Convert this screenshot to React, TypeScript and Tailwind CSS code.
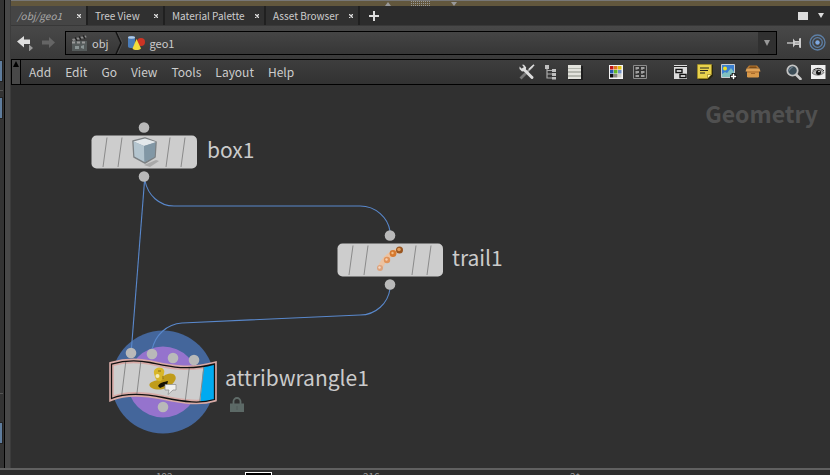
import type { ReactNode } from "react";

const tabs = [
  { name: "/obj/geo1", active: true, width: "w-[77px]" },
  { name: "Tree View", active: false, width: "w-[77px]" },
  { name: "Material Palette", active: false, width: "w-[101px]" },
  { name: "Asset Browser", active: false, width: "w-[94px]" },
];

const menus = ["Add", "Edit", "Go", "View", "Tools", "Layout", "Help"];

function Icon({ children }: { children: ReactNode }) {
  return (
    <svg viewBox="0 0 16 16" className="block size-4 shrink-0" aria-hidden="true">
      {children}
    </svg>
  );
}

const swatches = ["#c01818", "#e07818", "#e0c010", "#2858b0", "#60b828", "#7090c8", "#101010", "#888880", "#d0d0c8"];

const toolGroups: { label: string; icon: ReactNode }[][] = [
  [
    {
      label: "Tools",
      icon: (
        <Icon>
          <path d="M8 8 13.500 2.500" stroke="#999" strokeWidth="2" />
          <path d="M10 5.500 15 .800" stroke="#ddd" strokeWidth="1.600" />
          <path d="M1.500 14.500 7 9" stroke="#777" strokeWidth="2.800" />
          <path d="M4.500 5 13 13.500" stroke="#ddd" strokeWidth="3" strokeLinecap="round" />
          <path d="M.500 2.500v2.500l2.500 2.500 3.500-.600.700-3.500L5 .800H3l1.800 2.200-.500 1.500-1.400.300z" fill="#ddd" />
        </Icon>
      ),
    },
    {
      label: "Tree",
      icon: (
        <Icon>
          <path d="M4 3v11h6M4 6.500h6M4 10h6" stroke="#aaa" strokeWidth="1.200" fill="none" />
          <path d="M2 1h4v4H2zM9 5h4v3H9zM9 9h4v3H9zM9 13h4v2.500H9z" fill="#c0c0c0" />
        </Icon>
      ),
    },
    {
      label: "List",
      icon: (
        <Icon>
          <path d="M2 2h14v14H2z" fill="#1e1e1e" />
          <path d="M1 1h13v14H1z" fill="#b4b6ae" />
          <path d="M1 1h13v3H1zM1 5h13v2H1zM1 9h13v2H1zM1 13h13v2H1z" fill="#e2e2dc" />
        </Icon>
      ),
    },
  ],
  [
    {
      label: "Colour palette",
      icon: (
        <Icon>
          <path d="M1 1h14v14H1z" fill="#f4f4f4" />
          {swatches.map((c, i) => (
            <rect key={c} x={2 + (i % 3) * 4} y={2 + Math.floor(i / 3) * 4} width="3.500" height="3.500" fill={c} />
          ))}
        </Icon>
      ),
    },
    {
      label: "Shape palette",
      icon: (
        <Icon>
          <path d="M1.500 1.500h13v13h-13z" fill="#333" stroke="#8c8c8c" />
          <path d="M3.500 4h3.500M9 4h3.500M3.500 8h3.500M9 8h3.500M3.500 12h3.500M9 12h3.500" stroke="#c4c4c4" strokeWidth="1.600" />
          <path d="M3.500 5.500h2M9 5.500h2M3.500 9.500h2M9 9.500h2" stroke="#777" />
        </Icon>
      ),
    },
  ],
  [
    {
      label: "Network box",
      icon: (
        <Icon>
          <path d="M1 1h13v14H1z" fill="#dcdcdc" />
          <path d="M1 2.500h13" stroke="#222" />
          <path d="M3 5.500h6v3H3zM7 10.500h6v3H7z" fill="#fff" stroke="#111" strokeWidth="1.400" />
        </Icon>
      ),
    },
    {
      label: "Sticky note",
      icon: (
        <Icon>
          <path d="M1 1h15v11l-4 4H2z" fill="#2a2610" />
          <path d="M.500.500h14v10l-4 4H.500z" fill="#e8d24c" stroke="#a8901c" strokeWidth=".6" />
          <path d="M14.500 10.500h-4v4z" fill="#fff6a8" stroke="#8a7618" strokeWidth=".6" />
          <path d="M3 4h9M3 6.500h8M3 9h5" stroke="#222" strokeWidth="1.200" />
        </Icon>
      ),
    },
    {
      label: "Background image",
      icon: (
        <Icon>
          <path d="M.500.500h13v13H.500z" fill="#3b7fd0" stroke="#c8ccd0" />
          <circle cx="4" cy="4.500" r="2" fill="#f0e020" />
          <path d="M1 10 4 8l2 1 4-5 3 4v5H1z" fill="#7fc0c0" />
          <path d="M12.500 9v7M9 12.500h7" stroke="#111" strokeWidth="3.600" />
          <path d="M12.500 9.800v5.400M9.800 12.500h5.400" stroke="#fff" strokeWidth="1.500" />
        </Icon>
      ),
    },
    {
      label: "Assets",
      icon: (
        <Icon>
          <path d="M2 6h12v7l-1 .500H3L2 13z" fill="#d8994a" />
          <path d="M4 1.500h8l2.500 3H1.500z" fill="#b87830" />
          <path d="M5 2.500h6l1 1.500H4z" fill="#7c4a14" />
          <path d="m1.500 4.500h13l1 3H.500z" fill="#e0a358" />
          <path d="M2 7.500h12v1H2z" fill="#a8692a" />
          <path d="M6 9.500h4" stroke="#a8692a" />
        </Icon>
      ),
    },
  ],
  [
    {
      label: "Find",
      icon: (
        <Icon>
          <path d="m10 10.500 4.500 4.500" stroke="#ccc" strokeWidth="2.600" strokeLinecap="round" />
          <circle cx="6.500" cy="6.500" r="5.200" fill="#3c4d57" stroke="#c4c4c4" strokeWidth="1.800" />
          <path d="M3.500 6.500a3 3 0 0 1 3-3" stroke="#8090a0" fill="none" />
        </Icon>
      ),
    },
    {
      label: "Display options",
      icon: (
        <Icon>
          <path d="M1 1h14.500v14H1z" fill="#f0f0f0" />
          <path d="M2 9c2.500-4 9-4.500 12-.500-3 3.500-9 3.500-12 .500z" fill="#b8b8b8" stroke="#444" strokeWidth=".6" />
          <path d="M2.500 7c3-3.500 8.500-3.500 11.500 0" stroke="#222" fill="none" />
          <circle cx="8.500" cy="8.500" r="2.500" fill="#111" />
          <circle cx="9" cy="7.500" r=".8" fill="#fff" />
        </Icon>
      ),
    },
  ],
];

function NodeBody({ children }: { children: ReactNode }) {
  return (
    <svg viewBox="0 0 106 60" className="block h-[60px] w-[106px] shrink-0" aria-hidden="true">
      <circle cx="53" cy="5.500" r="5.300" fill="#b9b9b9" />
      <circle cx="53" cy="54.500" r="5.300" fill="#b9b9b9" />
      <rect x=".5" y="13.500" width="105.500" height="33" rx="5" fill="#cdcdcd" />
      <path d="m16 15.500-4 29.500M31 15.500l-4 29.500M79 15.500l-4 29.500M94 15.500l-4 29.500" stroke="#8a8a8a" />
      {children}
    </svg>
  );
}

const label = "pb-[6px] text-[21px] leading-8 whitespace-nowrap text-[#cbcbcb]";

const ribbon =
  "M111.500 364C122 361 137 360 150 362.500S185 372 214.500 364V399.500C200 404 185 402 163 397.500S125 393 111.500 398.500z";

function Network() {
  return (
    <main className="relative min-h-[383px] flex-1 overflow-hidden bg-[#303030]">
      <h1 className="absolute top-[10px] right-3 text-[23px] leading-9 font-bold text-[#505050]">Geometry</h1>

      <svg viewBox="0 0 500 383" className="absolute top-0 left-0 h-[383px] w-[500px]" aria-hidden="true">
        <circle cx="152" cy="297" r="51.500" fill="#44669b" />
        <circle cx="152" cy="297" r="35.500" fill="#9573cd" />
        <g fill="none" stroke="#5988cc" strokeWidth="1.100">
          <path d="M133.500 96 120.500 263" />
          <path d="M134 96c3 14 14 25 29 25h186c16 0 28 12 30 25" />
          <path d="M379 204c-2 14-14 26-30 26l-178 8c-15 1-27 12-30 27" />
        </g>
      </svg>

      <div className="absolute top-[37px] left-[80px] flex items-center gap-[10px]">
        <NodeBody>
          <path d="m53 43 12-5 3 1-9 6z" fill="#9a9a9a" opacity=".7" />
          <path d="m42 19 12-3 11 4-1 15-10 6-11-6z" fill="#8fa1ad" stroke="#7c8083" strokeWidth="1.600" strokeLinejoin="round" />
          <path d="m42.500 19.500 11.500-3 11 3.500-12 4z" fill="#e3e8eb" />
          <path d="m42.500 19.500 10.500 4.500.500 16-10-5.500z" fill="#b4c5cf" />
          <path d="m53 24 11.500-3.500-1 14.500-10 5z" fill="#8197a5" />
        </NodeBody>
        <span className={label}>box1</span>
      </div>

      <div className="absolute top-[145px] left-[326px] flex items-center gap-[9px]">
        <NodeBody>
          <path d="M43 38C46 30 52 24 62 20" stroke="#ecc3a2" strokeWidth="5" fill="none" />
          <circle cx="43" cy="38" r="3" fill="#dca27c" />
          <circle cx="50" cy="30" r="3.200" fill="#e0935a" />
          <circle cx="56" cy="23.500" r="3.400" fill="#d67a30" />
          <circle cx="62.500" cy="20" r="3.500" fill="#9a5620" />
          <circle cx="62" cy="19.500" r="1.800" fill="#e6a05c" />
          <circle cx="55.500" cy="23" r="1.200" fill="#f4bc84" />
          <circle cx="49.500" cy="29.500" r="1.200" fill="#f6d0b0" />
          <circle cx="42.500" cy="37.500" r="1.200" fill="#f4d8c4" />
        </NodeBody>
        <span className={label}>trail1</span>
      </div>

      <div className="absolute top-[262px] left-[97px] flex items-center gap-[9px]">
        <svg viewBox="108 347 108 66" className="block h-[66px] w-[108px] shrink-0 overflow-visible" aria-hidden="true">
          <clipPath id="flag">
            <path d={ribbon} />
          </clipPath>
          <g fill="#b9b9b9">
            <circle cx="131" cy="353" r="5.300" />
            <circle cx="152" cy="354" r="5.300" />
            <circle cx="173" cy="358" r="5.300" />
            <circle cx="194" cy="360" r="5.300" />
            <circle cx="163" cy="407" r="5.300" />
          </g>
          <path d={ribbon} fill="#cdcdcd" stroke="#d8aaa6" strokeWidth="4.600" />
          <g clipPath="url(#flag)">
            <path d="M204 358h14v48h-18z" fill="#00aaf0" />
            <path d="m126 360-4.500 37M141 360l-4.500 37M189.500 366l-4.500 37M204 366l-4.500 37" stroke="#888" />
          </g>
          <path d={ribbon} fill="none" stroke="#111" strokeWidth="1.300" />
          <path d="M149.500 384c2-3 6-3 9-4.500 4-2 7-6 12-6 4 0 6 3 5 6-2 5-8 9-15 10-6 .500-12-2-11-5.500z" fill="#c09c1a" />
          <path d="M154 371c1-4 8-5 10-1 1 3-1 4 0 7l-3 4c-3 1-5-1-6-4-.500-2-1.500-4-1-6z" fill="#d8b628" />
          <path d="M158 386c2-4 6-4 10-5l-1 4-7 3z" fill="#171204" />
          <circle cx="157.500" cy="376" r="2" fill="#f2eab8" />
          <path d="M158 371h3M163 376v3" stroke="#8a6c10" />
          <path d="M165 384.500h11v5.500h-3l-5 4.500 1-4.500h-4z" fill="#f0f0f0" stroke="#888" strokeWidth=".7" />
        </svg>
        <span className={label}>attribwrangle1</span>
      </div>
      <svg viewBox="0 0 14 16" className="absolute top-[312px] left-[219px] h-4 w-[14px]" role="img" aria-label="Locked">
        <path d="M3.500 7V4.500a3.500 3.500 0 0 1 7 0V7" fill="none" stroke="#606c69" strokeWidth="1.800" />
        <path d="M0 6.500h14V15H0z" fill="#5c6966" />
        <path d="M6.500 9h1v4h-1z" fill="#505b58" />
      </svg>
    </main>
  );
}

export default function App() {
  return (
    <div className="flex min-h-screen flex-col border-r border-white bg-[#303030] font-['Noto_Sans_CJK_SC','Noto_Sans',sans-serif] text-[#cccccc]">
      <div className="flex flex-1">
        <aside className="flex w-[11px] shrink-0 flex-col border-r border-[#3c3c3c] bg-[#484848]">
          <div className="flex w-[5px] flex-1 flex-col border-r border-black bg-[#333333]">
            <div className="mt-[60px] h-[22px] w-[3px] border-y border-r border-[#222222] bg-[#5f7d9e]" />
            <div className="mt-2 h-px w-[3px] bg-[#555555]" />
            <div className="mt-[6px] h-[22px] w-[3px] border-y border-r border-[#222222] bg-[#5f7d9e]" />
            <div className="mt-auto h-px w-[3px] bg-[#555555]" />
            <div className="mt-7 mb-6 h-[22px] w-[3px] border-y border-r border-[#222222] bg-[#5f7d9e]" />
          </div>
        </aside>

        <div className="flex min-w-0 flex-1 flex-col">
          <div className="flex h-[6px] items-center justify-center gap-5 border-t border-[#777777] bg-[#62573d]">
            <svg viewBox="0 0 6 4" className="h-[4px] w-[6px]" aria-hidden="true"><path d="M0 4 3 0l3 4z" fill="#999" /></svg>
            <svg viewBox="0 0 20 5" className="h-[5px] w-5" aria-hidden="true">
              <path d="M0 .500h20M0 2.500h20M0 4.500h20" stroke="#999" strokeDasharray="1 1" />
            </svg>
            <svg viewBox="0 0 6 4" className="h-[4px] w-[6px]" aria-hidden="true"><path d="M0 0h6L3 4z" fill="#999" /></svg>
          </div>

          <div className="flex h-5 items-stretch border-b border-[#383838] bg-[#2c2c2c]">
            {tabs.map((t) => (
              <div
                key={t.name}
                className={`${t.width} flex items-center justify-between border-r-2 border-[#202020] pr-[5px] ${t.active ? "bg-[#454545] pl-[6px]" : "bg-[#303030] pl-[7px]"}`}
              >
                <button className={`text-[10px] leading-5 whitespace-nowrap ${t.active ? "italic text-[#aaaaaa]" : ""}`}>{t.name}</button>
                <button aria-label={`Close ${t.name}`}>
                  <svg viewBox="0 0 4 4" className="block size-1"><path d="m0 0 4 4M4 0 0 4" stroke="#ddd" strokeWidth="1.300" /></svg>
                </button>
              </div>
            ))}
            <button aria-label="New tab" className="px-[9px]">
              <svg viewBox="0 0 10 10" className="block size-[10px]"><path d="M5 0v10M0 5h10" stroke="#ddd" strokeWidth="2" /></svg>
            </button>
            <div className="ml-auto flex items-center gap-[10px] pr-[6px]">
              <button aria-label="Maximize pane" className="h-2 w-[10px] bg-[#dddddd]" />
              <button aria-label="Pane menu">
                <svg viewBox="0 0 6 5" className="block h-[5px] w-[6px]"><path d="M0 0h6L3 5z" fill="#ddd" /></svg>
              </button>
            </div>
          </div>

          <div className="flex h-[33px] items-center bg-linear-to-b from-[#484848] to-[#3a3a3a] pr-1 pl-[6px]">
            <button aria-label="Back" className="mr-2">
              <svg viewBox="0 0 17 17" className="block size-[17px]">
                <path d="M0 7.500 7 2v3.500h6v4.500H7v3.500z" fill="#dedede" />
                <path d="m12 10.500 4 3.500-4 3.500z" fill="#999" />
              </svg>
            </button>
            <button aria-label="Forward" className="mr-[10px]">
              <svg viewBox="0 0 13 13" className="block size-[13px]"><path d="M13 6.500 7 1v3.500H0v4h7V12z" fill="#656565" /></svg>
            </button>
            <div className="flex h-6 min-w-0 flex-1 items-stretch border border-black bg-linear-to-b from-[#454545] to-[#363636] text-[11px] leading-5">
              <button className="flex items-center gap-[3px] pl-[5px]">
                <svg viewBox="0 0 18 18" className="block size-[18px]" aria-hidden="true">
                  <path d="M1 7h15v10H1z" fill="#555b5b" />
                  <path d="m1 5 14-3.500.500 2L2 7z" fill="#8c8c8c" />
                  <path d="m4 3.500 2 3M8 2.500l2 3M12 1.500l2 3" stroke="#222" strokeWidth="1.500" />
                  <path d="M1 8.500h15" stroke="#999" strokeDasharray="3 2" strokeWidth="2" />
                  <path d="M4 12h4v3H4zM10 12l3-1v4l-3-1z" fill="#8a9494" />
                </svg>
                obj
              </button>
              <svg viewBox="0 0 8 22" className="ml-[6px] block h-[22px] w-2" aria-hidden="true">
                <path d="m1 0 5 11-5 11" fill="none" stroke="#141414" strokeWidth="1.500" />
                <path d="m2.500 0 5 11-5 11" fill="none" stroke="#555" strokeWidth=".7" />
              </svg>
              <button className="flex items-center gap-[5px] pl-[5px]">
                <svg viewBox="0 0 17 16" className="block h-4 w-[17px]" aria-hidden="true">
                  <path d="M0 2.500C0 .500 7 .500 7 2.500v9c0 2-7 2-7 0z" fill="#4a7cb8" />
                  <ellipse cx="3.500" cy="2.500" rx="3.500" ry="1.200" fill="#b4cce4" />
                  <circle cx="13" cy="7" r="4" fill="#cc3424" />
                  <path d="m8.500 4 4.500 9.500c-2 2-7 2-8.500 0z" fill="#f2dc3c" />
                </svg>
                geo1
              </button>
              <button aria-label="Path history" className="ml-auto flex w-[18px] items-center justify-center bg-[#303030]">
                <svg viewBox="0 0 6 6" className="block size-[6px]"><path d="M0 0h6L3 6z" fill="#999" /></svg>
              </button>
            </div>
            <button aria-label="Pin" className="ml-[10px]">
              <svg viewBox="0 0 16 12" className="block h-3 w-4">
                <path d="M0 6h6" stroke="#bbb" strokeWidth="1.500" />
                <path d="M6 1.500 8 4h4V1.500l2-.500v10l-2-.500V8H8l-2 2.500z" fill="#ccc" />
                <path d="M8 6h4" stroke="#888" />
              </svg>
            </button>
            <button aria-label="Link pane" className="ml-[6px]">
              <svg viewBox="0 0 17 17" className="block size-[17px]" fill="none">
                <circle cx="8.500" cy="8.500" r="7.500" stroke="#5d7fa6" strokeWidth="1.300" />
                <circle cx="8.500" cy="8.500" r="4.800" stroke="#5d7fa6" strokeWidth="1.300" />
                <circle cx="8.500" cy="8.500" r="2.200" fill="#7ea8e0" />
              </svg>
            </button>
          </div>

          <nav className="flex h-[26px] items-stretch border-y border-black bg-linear-to-b from-[#3e3e3e] to-[#323232] pr-1">
            <button aria-label="Collapse toolbar" className="flex w-[10px] justify-center border-x border-black bg-[#484848] pt-px">
              <svg viewBox="0 0 6 6" className="block size-[6px]"><path d="M0 6 3 0l3 6z" fill="#000" /></svg>
            </button>
            <div className="flex items-center gap-[14px] pl-2 text-[12px] leading-6">
              {menus.map((m) => (
                <button key={m}>{m}</button>
              ))}
            </div>
            <div className="ml-auto flex items-center gap-[25px]">
              {toolGroups.map((group) => (
                <div key={group[0].label} className="flex gap-2">
                  {group.map((tool) => (
                    <button key={tool.label} aria-label={tool.label}>{tool.icon}</button>
                  ))}
                </div>
              ))}
            </div>
          </nav>

          <Network />
        </div>
      </div>

      <footer className="relative h-[7px] overflow-hidden border-t-2 border-[#606060] bg-[#2e2e2e] text-[10px] leading-3 text-[#999999]">
        <span className="absolute top-px left-[156px]">192</span>
        <span className="absolute top-[2px] left-[245px] h-3 w-[27px] border border-white bg-black" />
        <span className="absolute top-px left-[363px]">216</span>
        <span className="absolute top-px left-[570px]">2*</span>
      </footer>
    </div>
  );
}
